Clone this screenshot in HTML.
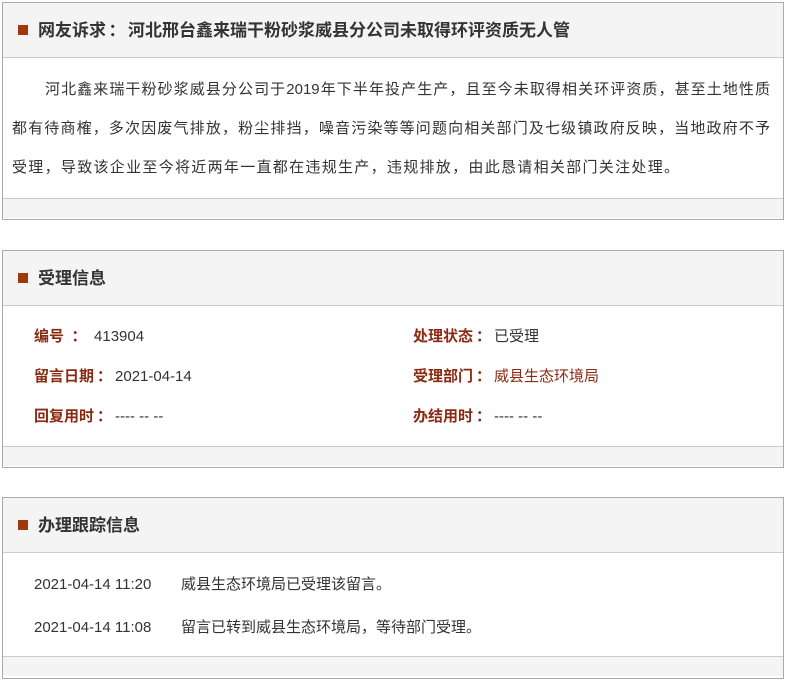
<!DOCTYPE html>
<html><head><meta charset="utf-8"><style>
body{margin:0;background:#fff;font-family:"Liberation Sans","Microsoft YaHei","Noto Sans CJK SC",sans-serif;color:#333;font-size:15px}
.box{position:absolute;left:2px;width:780px;border:1px solid #aaa;background:#fff}
.hd{height:54px;background:#f4f4f4;border-bottom:1px solid #ccc;position:relative}
.hd i{position:absolute;left:15px;top:22px;width:10px;height:10px;background:#a0380c}
.hd b{position:absolute;left:35px;top:0;line-height:56px;font-size:17px;color:#333;white-space:nowrap}
.ft{height:19px;background:#f4f4f4;border-top:1px solid #ccc}
.row{position:absolute;white-space:nowrap}
.l{color:#8b2a12;font-weight:bold}
.br{color:#8b2a12}
.c{display:inline-block;text-align:center}
.ln{display:block;text-align:justify;text-align-last:justify;white-space:nowrap}
.d{display:inline-block;width:147px}
</style></head><body>
<div class="box" style="top:2px;height:216px">
<div class="hd"><i></i><b>网友诉求<span class="c" style="width:22px">：</span>河北邢台鑫来瑞干粉砂浆威县分公司未取得环评资质无人管</b></div>
<div style="padding:12px 13px 0 9px;line-height:39px;height:140px;box-sizing:border-box;font-size:15px">
<span class="ln" style="padding-left:33px">河北鑫来瑞干粉砂浆威县分公司于2019年下半年投产生产，且至今未取得相关环评资质，甚至土地性质</span>
<span class="ln">都有待商榷，多次因废气排放，粉尘排挡，噪音污染等等问题向相关部门及七级镇政府反映，当地政府不予</span>
<span style="display:block;letter-spacing:1.3px">受理，导致该企业至今将近两年一直都在违规生产，违规排放，由此恳请相关部门关注处理。</span>
</div>
<div class="ft"></div>
</div>
<div class="box" style="top:250px;height:216px">
<div class="hd"><i></i><b>受理信息</b></div>
<div style="position:relative;height:140px">
<div class="row" style="left:31px;top:19px"><span class="l">编号<span class="c" style="width:30px">：</span></span>413904</div>
<div class="row" style="left:410px;top:19px"><span class="l">处理状态<span class="c" style="width:21px">：</span></span>已受理</div>
<div class="row" style="left:31px;top:59px"><span class="l">留言日期<span class="c" style="width:21px">：</span></span>2021-04-14</div>
<div class="row" style="left:410px;top:59px"><span class="l">受理部门<span class="c" style="width:21px">：</span></span><span class="br">威县生态环境局</span></div>
<div class="row" style="left:31px;top:99px"><span class="l">回复用时<span class="c" style="width:21px">：</span></span>---- -- --</div>
<div class="row" style="left:410px;top:99px"><span class="l">办结用时<span class="c" style="width:21px">：</span></span>---- -- --</div>
</div>
<div class="ft"></div>
</div>
<div class="box" style="top:497px;height:180px">
<div class="hd"><i></i><b>办理跟踪信息</b></div>
<div style="position:relative;height:103px">
<div class="row" style="left:31px;top:20px"><span class="d">2021-04-14 11:20</span>威县生态环境局已受理该留言。</div>
<div class="row" style="left:31px;top:63px"><span class="d">2021-04-14 11:08</span>留言已转到威县生态环境局，等待部门受理。</div>
</div>
<div class="ft"></div>
</div>
</body></html>
